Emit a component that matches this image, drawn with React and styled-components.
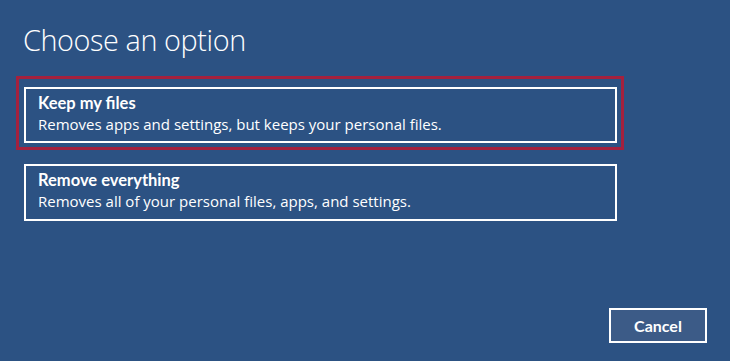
import React from "react";
import styled, { createGlobalStyle } from "styled-components";

const Global = createGlobalStyle`
  html, body { margin: 0; padding: 0; background: #2c5283; }
  body { font-family: "Open Sans", "Noto Sans", sans-serif; color: #fff; }
`;

const Page = styled.div`
  width: 730px;
  height: 361px;
  box-sizing: border-box;
  background: #2c5283;
  padding: 20px 0 0 16px;
  display: flex;
  flex-direction: column;
`;

const Title = styled.h1`
  margin: 0 0 0 7px;
  font-family: "Open Sans", sans-serif;
  font-weight: 300;
  font-size: 28.8px;
  line-height: 39px;
  color: #fff;
  letter-spacing: -0.4px;
`;

const Options = styled.div`
  margin-top: 17px;
  display: flex;
  flex-direction: column;
  gap: 11px;
  width: 608px;
`;

const Highlight = styled.div`
  border: 3px solid ${(p) => (p.$on ? "#a4213e" : "transparent")};
  padding: ${(p) => (p.$on ? "8px 4px 4px 5px" : "0 4px 0 5px")};
`;

const Card = styled.div`
  border: 2px solid #fff;
  height: ${(p) => p.$h}px;
  box-sizing: border-box;
  padding: 5px 0 0 12px;
  display: flex;
  flex-direction: column;
`;

const CardTitle = styled.div`
  font-family: "Lato", sans-serif;
  font-weight: 700;
  font-size: 16.5px;
  line-height: 18px;
`;

const CardText = styled.div`
  font-family: "Open Sans", sans-serif;
  font-weight: 400;
  font-size: 15px;
  line-height: 25px;
`;

const Footer = styled.div`
  margin-top: auto;
  display: flex;
  justify-content: flex-end;
  padding: 0 23px 18px 0;
`;

const Button = styled.button`
  width: 98px;
  height: 35px;
  border: 2px solid #fff;
  background: #3c5b87;
  color: #fff;
  font-family: "Lato", sans-serif;
  font-weight: 700;
  font-size: 16px;
  padding: 0;
`;

export default function App() {
  return (
    <>
      <Global />
      <Page>
        <Title>Choose an option</Title>
        <Options>
          <Highlight $on>
            <Card $h={56}>
              <CardTitle>Keep my files</CardTitle>
              <CardText>Removes apps and settings, but keeps your personal files.</CardText>
            </Card>
          </Highlight>
          <Highlight>
            <Card $h={57}>
              <CardTitle>Remove everything</CardTitle>
              <CardText>Removes all of your personal files, apps, and settings.</CardText>
            </Card>
          </Highlight>
        </Options>
        <Footer>
          <Button>Cancel</Button>
        </Footer>
      </Page>
    </>
  );
}
